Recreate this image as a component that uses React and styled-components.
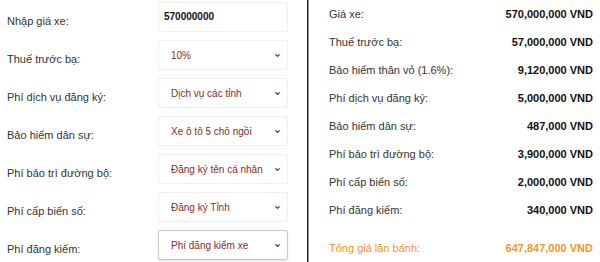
import React from 'react'
import styled, { createGlobalStyle } from 'styled-components'
import { ChevronDown } from 'lucide-react'

const GlobalStyle = createGlobalStyle`
  html, body {
    margin: 0;
    padding: 0;
    background: #fff;
  }
  body {
    font-family: "Liberation Sans", Arial, sans-serif;
  }
`

const Page = styled.div`
  display: flex;
  width: 600px;
  height: 262px;
  overflow: hidden;
`

const Form = styled.div`
  width: 307px;
  box-sizing: border-box;
  padding: 2px 19px 0 7px;
  display: flex;
  flex-direction: column;
  gap: 8px;
`

const Row = styled.div`
  display: flex;
  align-items: center;
  height: 30px;
`

const Label = styled.label`
  flex: 1;
  padding-top: 8px;
  font-size: 11px;
  line-height: 14px;
  color: #333;
`

const Field = styled.div`
  position: relative;
  width: 130px;
  height: 30px;
  box-sizing: border-box;
  border: 1px solid ${p => (p.$focused ? '#c8c8c8' : '#efefef')};
  border-radius: 2px;
  box-shadow: ${p => (p.$focused ? '0 1px 2px rgba(0,0,0,0.12)' : 'none')};
  background: #fff;
`

const Input = styled.input`
  width: 100%;
  height: 100%;
  box-sizing: border-box;
  border: none;
  outline: none;
  background: transparent;
  padding: 0 0 2px 5px;
  font-family: "Liberation Sans", Arial, sans-serif;
  font-size: 10px;
  font-weight: bold;
  color: #111;
`

const Select = styled.select`
  appearance: none;
  -webkit-appearance: none;
  width: 100%;
  height: 100%;
  border: none;
  outline: none;
  background: transparent;
  padding: 0 0 0 12px;
  font-family: "Liberation Sans", Arial, sans-serif;
  font-size: 10px;
  color: #862a2c;
`

const Chevron = styled(ChevronDown)`
  position: absolute;
  right: 6px;
  top: 50%;
  margin-top: -3px;
  width: 7px;
  height: 7px;
  color: #7b1f22;
  pointer-events: none;
`

const Summary = styled.div`
  flex: 1;
  box-sizing: border-box;
  border-left: 1px solid #1c1c1c;
  box-shadow: inset 1px 0 0 #9a9a9a;
  padding: 0 7px 0 21px;
`

const Line = styled.div`
  display: flex;
  justify-content: space-between;
  align-items: center;
  height: 28px;
  margin-top: ${p => (p.$total ? '10px' : '0')};
  font-size: 11px;
  color: ${p => (p.$total ? '#f7941d' : '#333')};
`

const Value = styled.span`
  font-weight: bold;
  color: ${p => (p.$total ? '#f7941d' : '#111')};
`

const selects = [
  ['Thuế trước bạ:', '10%'],
  ['Phí dịch vụ đăng ký:', 'Dịch vụ các tỉnh'],
  ['Bảo hiểm dân sự:', 'Xe ô tô 5 chỗ ngồi'],
  ['Phí bảo trì đường bộ:', 'Đăng ký tên cá nhân'],
  ['Phí cấp biển số:', 'Đăng ký Tỉnh'],
  ['Phí đăng kiểm:', 'Phí đăng kiểm xe'],
]

const costs = [
  ['Giá xe:', '570,000,000 VND'],
  ['Thuế trước bạ:', '57,000,000 VND'],
  ['Bảo hiểm thân vỏ (1.6%):', '9,120,000 VND'],
  ['Phí dịch vụ đăng ký:', '5,000,000 VND'],
  ['Bảo hiểm dân sự:', '487,000 VND'],
  ['Phí bảo trì đường bộ:', '3,900,000 VND'],
  ['Phí cấp biển số:', '2,000,000 VND'],
  ['Phí đăng kiểm:', '340,000 VND'],
]

export default function App() {
  return (
    <>
      <GlobalStyle />
      <Page>
        <Form>
          <Row>
            <Label>Nhập giá xe:</Label>
            <Field>
              <Input defaultValue="570000000" />
            </Field>
          </Row>
          {selects.map(([label, value], i) => (
            <Row key={label}>
              <Label>{label}</Label>
              <Field $focused={i === selects.length - 1}>
                <Select defaultValue={value}>
                  <option>{value}</option>
                </Select>
                <Chevron strokeWidth={4} />
              </Field>
            </Row>
          ))}
        </Form>
        <Summary>
          {costs.map(([label, value]) => (
            <Line key={label}>
              <span>{label}</span>
              <Value>{value}</Value>
            </Line>
          ))}
          <Line $total>
            <span>Tổng giá lăn bánh:</span>
            <Value $total>647,847,000 VND</Value>
          </Line>
        </Summary>
      </Page>
    </>
  )
}
